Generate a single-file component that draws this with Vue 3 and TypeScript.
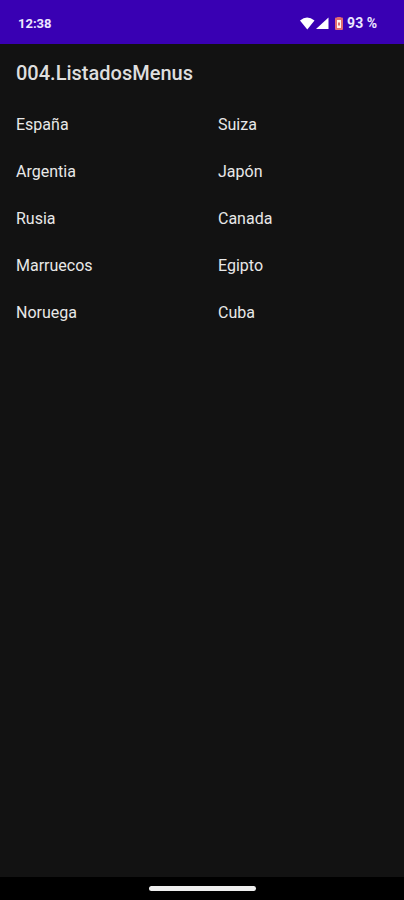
<script setup lang="ts">
const title = '004.ListadosMenus'
const countries: string[] = [
  'España', 'Suiza',
  'Argentia', 'Japón',
  'Rusia', 'Canada',
  'Marruecos', 'Egipto',
  'Noruega', 'Cuba',
]
</script>

<template>
  <div class="screen">
    <header class="status-bar">
      <time class="clock">12:38</time>
      <div class="indicators">
        <svg class="signals" width="29" height="13" viewBox="0 0 29 13" aria-hidden="true">
          <path d="M0 3.4Q7 -2.2 14.5 3.4L7.3 12.4Z" />
          <path d="M28.5 0.5V12H16Z" />
        </svg>
        <svg class="battery" width="8" height="13" viewBox="0 0 8 13" aria-hidden="true">
          <path class="case" d="M2.2 0H5.8V0.6H7Q8 0.6 8 1.6V12Q8 13 7 13H1Q0 13 0 12V1.6Q0 0.6 1 0.6H2.2Z" />
          <path class="inside" d="M2 3H6V11H2Z" />
          <path class="case" d="M3 5.5H5V8.5H3Z" />
        </svg>
        <span class="level">93 %</span>
      </div>
    </header>
    <main class="content">
      <h1 class="title">{{ title }}</h1>
      <ul class="countries">
        <li v-for="country in countries" :key="country" class="country">{{ country }}</li>
      </ul>
    </main>
    <footer class="nav-bar">
      <div class="handle"></div>
    </footer>
  </div>
</template>

<style>
body {
  background: #121212;
}
</style>

<style scoped>
.screen {
  display: flex;
  flex-direction: column;
  min-height: 100vh;
  background: #121212;
  color: #e8e8e8;
  font-family: Roboto, "Liberation Sans", sans-serif;
}

.status-bar {
  display: flex;
  align-items: center;
  justify-content: space-between;
  box-sizing: border-box;
  height: 44px;
  padding: 2px 27px 0 18px;
  background: #3900b3;
  color: #ece6ff;
  font-size: 13px;
  font-weight: 700;
}

.indicators {
  display: flex;
  align-items: center;
}

.signals {
  fill: #ffffff;
}

.battery {
  margin: 0 4px 0 6px;
}

.case {
  fill: #e06a70;
}

.inside {
  fill: #fff2ec;
}

.level {
  font-size: 14px;
}

.content {
  flex: 1;
  padding-top: 1px;
}

.title {
  margin: 0;
  padding: 0 16px;
  font-size: 20px;
  font-weight: 500;
  line-height: 56px;
  color: #dedede;
}

.countries {
  display: grid;
  grid-template-columns: 1fr 1fr;
  margin: 0;
  padding: 0;
  list-style: none;
}

.country {
  padding: 0 16px;
  font-size: 16px;
  line-height: 47px;
}

.nav-bar {
  display: flex;
  align-items: center;
  justify-content: center;
  height: 23px;
  background: #000000;
}

.handle {
  width: 107px;
  height: 5px;
  border-radius: 3px;
  background: #eeeeee;
}
</style>
